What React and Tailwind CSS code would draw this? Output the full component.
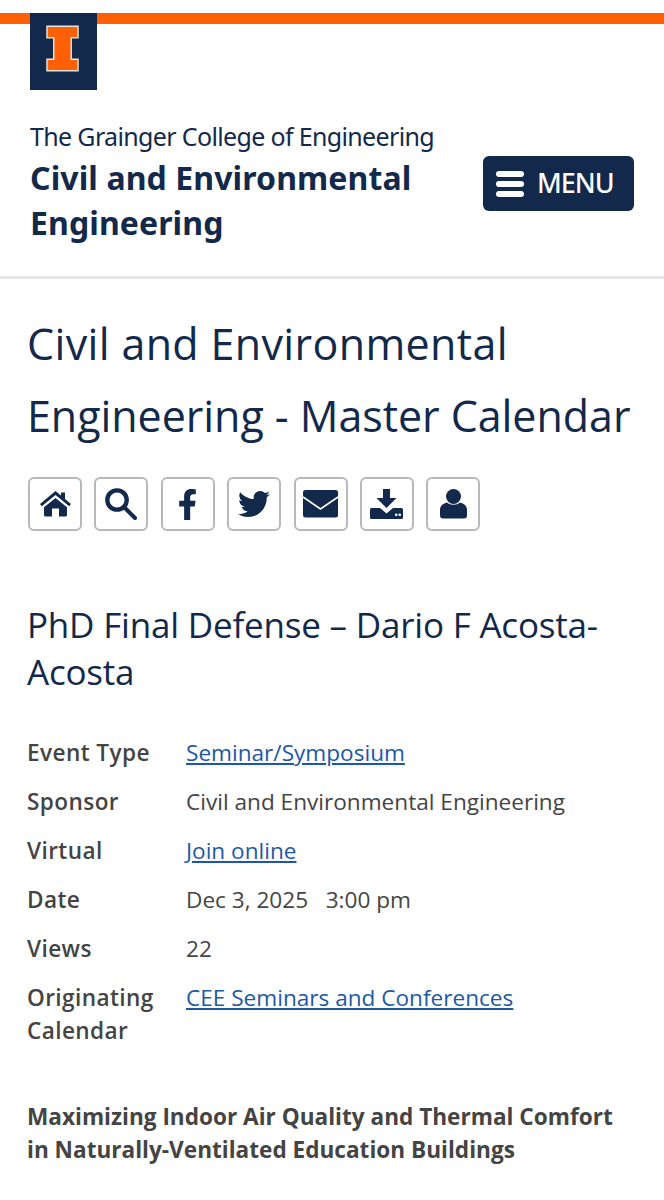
import React from 'react';
import { FaFacebookF, FaTwitter } from 'react-icons/fa';

const NAVY = '#13294b';

const HomeIcon = () => (
  <svg viewBox="0 0 31 26" className="w-[31px] h-[26px]" fill={NAVY}>
    <path d="M15.5 0 21 4.6V1.5h4v6.5l6 5-1.8 2.2L15.5 4 1.8 15.2 0 13z" />
    <path d="M15.5 7 27 16.2V24a1.6 1.6 0 0 1-1.6 1.6H19v-8h-7v8H5.6A1.6 1.6 0 0 1 4 24v-7.8z" />
  </svg>
);

const SearchIcon = () => (
  <svg viewBox="0 0 32 33" className="w-[32px] h-[33px]" fill="none" stroke={NAVY}>
    <circle cx="12" cy="12" r="9.7" strokeWidth="4.3" />
    <path d="M20 20l10 10" strokeWidth="4" strokeLinecap="round" />
  </svg>
);

const EnvelopeIcon = () => (
  <svg viewBox="0 0 35 28" className="w-[35px] h-[28px]">
    <rect width="35" height="27.5" rx="2.5" fill={NAVY} />
    <path d="M0 7l17.500 12L35 7" fill="none" stroke="#fff" strokeWidth="1.6" />
  </svg>
);

const DownloadIcon = () => (
  <svg viewBox="0 0 33 30" className="w-[33px] h-[30px]" fill={NAVY}>
    <path d="M13 0h7v9h6.500L16.500 19 6.500 9H13z" />
    <path d="M1.500 19H10l6.500 5.500L23 19h8.500a1.500 1.500 0 0 1 1.500 1.500v8a1.500 1.500 0 0 1-1.500 1.500h-30A1.500 1.500 0 0 1 0 28.500v-8A1.500 1.500 0 0 1 1.500 19z" />
    <rect x="25" y="24.500" width="2.500" height="2.500" rx="1" fill="#fff" />
    <rect x="28.500" y="24.500" width="2.500" height="2.500" rx="1" fill="#fff" />
  </svg>
);

const UserIcon = () => (
  <svg viewBox="0 0 27 30" className="w-[27px] h-[30px]" fill={NAVY}>
    <circle cx="13.500" cy="7.500" r="7.500" />
    <path d="M7 13.500c3.500 3 9.500 3 13 0 4 .8 7 3.500 7 7.500v5.500a3 3 0 0 1-3 3H3a3 3 0 0 1-3-3V21c0-4 3-6.700 7-7.500z" />
  </svg>
);

const ShareButton = ({ children }) => (
  <div className="w-[54px] h-[54px] flex items-center justify-center border-2 border-[#b8b8b8] rounded-md text-[#13294b]">
    {children}
  </div>
);

const details = [
  { label: 'Event Type', value: 'Seminar/Symposium', link: true },
  { label: 'Sponsor', value: 'Civil and Environmental Engineering' },
  { label: 'Virtual', value: 'Join online', link: true },
  { label: 'Date', value: 'Dec 3, 2025\u00a0\u00a0 3:00 pm' },
  { label: 'Views', value: '22' },
  { label: 'Originating Calendar', value: 'CEE Seminars and Conferences', link: true },
];

export default function App() {
  return (
    <div className="w-[664px] h-[1200px] overflow-hidden bg-white font-['Open_Sans',sans-serif]">
      {/* top bar and block I */}
      <div className="pt-[13px]">
        <div className="h-[11px] bg-[#ff5f05]" />
        <div className="relative -mt-[11px] ml-[30px] w-[67px] h-[77px] bg-[#13294b] flex items-center justify-center">
          <svg viewBox="0 0 34 48" className="w-[33px] h-[47px] -mt-[7px] -ml-[2px]">
            <path d="M1 1h32v12h-7v22h7v12H1V35h7V13H1z" fill="#ff5f05" stroke="#e8e4dc" strokeWidth="1.5" />
          </svg>
        </div>
      </div>

      {/* college header */}
      <div className="h-[189px] border-b-[3px] border-[#e6e6e6] pl-[30px] pr-[30px] flex items-start justify-between">
        <div className="pt-[28px] font-['Noto_Sans',sans-serif] text-[#13294b]">
          <div className="text-[25px] leading-[36px] tracking-[-0.65px]">The Grainger College of Engineering</div>
          <div className="mt-[1px] text-[32px] leading-[45px] font-bold tracking-[0.1px]">
            Civil and Environmental<br />Engineering
          </div>
        </div>
        <div className="mt-[66px] w-[151px] h-[55px] bg-[#13294b] rounded-md flex items-center pl-[13px] gap-[13px]">
          <div className="flex flex-col gap-[4px]">
            <div className="w-[28px] h-[6px] rounded-full bg-white" />
            <div className="w-[28px] h-[6px] rounded-full bg-white" />
            <div className="w-[28px] h-[6px] rounded-full bg-white" />
          </div>
          <span className="font-['Noto_Sans',sans-serif] text-[27px] font-medium tracking-[-1px] text-white">MENU</span>
        </div>
      </div>

      <div className="px-[28px]">
        <h1 className="mt-[29px] -ml-[1px] text-[43px] leading-[72px] text-[#13294b]">
          <span className="tracking-[0.35px]">Civil and Environmental</span><br />
          <span className="tracking-[-0.05px]">Engineering - Master Calendar</span>
        </h1>

        <div className="mt-[25px] flex gap-[12.4px]">
          <ShareButton><HomeIcon /></ShareButton>
          <ShareButton><SearchIcon /></ShareButton>
          <ShareButton><FaFacebookF size={31} /></ShareButton>
          <ShareButton><FaTwitter size={32} /></ShareButton>
          <ShareButton><EnvelopeIcon /></ShareButton>
          <ShareButton><DownloadIcon /></ShareButton>
          <ShareButton><UserIcon /></ShareButton>
        </div>

        <h2 className="mt-[70px] -ml-[1px] text-[35px] leading-[47px] text-[#13294b] tracking-[-0.2px]">
          PhD Final Defense – Dario F Acosta-<br />Acosta
        </h2>

        <div className="mt-[41px] grid grid-cols-[158px_1fr] gap-y-[16px] text-[22.6px] leading-[33px] text-[#444444]">
          {details.map((row) => (
            <React.Fragment key={row.label}>
              <div className="-ml-[1px] font-semibold tracking-[0.4px] pr-[10px]">{row.label}</div>
              {row.link ? (
                <div><a href="#" className="text-[#1d58a7] underline">{row.value}</a></div>
              ) : (
                <div>{row.value}</div>
              )}
            </React.Fragment>
          ))}
        </div>

        <p className="mt-[53px] -ml-[1px] text-[22.6px] leading-[33px] font-bold text-[#444444] whitespace-nowrap">
          Maximizing Indoor Air Quality and Thermal Comfort<br />in Naturally-Ventilated Education Buildings
        </p>
      </div>
    </div>
  );
}
